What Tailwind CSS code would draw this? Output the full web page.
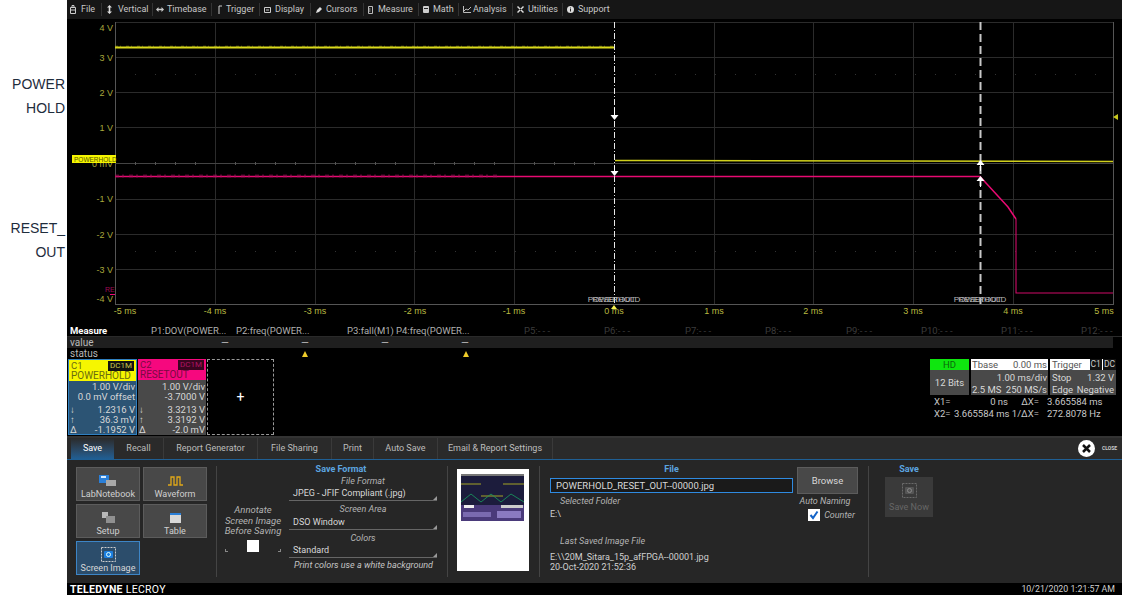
<!DOCTYPE html>
<html>
<head>
<meta charset="utf-8">
<script src="https://cdn.jsdelivr.net/npm/@tailwindcss/browser@4"></script>
</head>
<body class="bg-white">
<div class="flex w-[1122px] h-[595px] overflow-hidden font-['Liberation_Sans',Arial,sans-serif]">
  <!-- left labels -->
  <div class="w-[67px] shrink-0 bg-white text-[#1f2d3d] text-[14px] leading-[24px] text-right pr-[2px] pt-[72px]">
    <div>POWER</div>
    <div>HOLD</div>
    <div class="mt-[96px]">RESET_</div>
    <div>OUT</div>
  </div>

  <div class="w-[1055px] flex flex-col bg-black text-[#cfcfcf] text-[9.5px] leading-[11px] font-['Roboto','Liberation_Sans',sans-serif]">
    <!-- menu -->
    <div class="h-[19px] flex items-center bg-[#161616] text-[#c8c8c8] text-[9px] shrink-0 pl-[3px]">
      <div class="w-[32px] flex items-center gap-[5px] border-r border-[#333] h-[13px]"><svg class="w-[6px] h-[9px]" viewBox="0 0 6 9"><path d="M.5 2.500h5v6h-5zM2 2.500v-2h2v2M.5 5h5" fill="none" stroke="#ccc"/></svg>File</div>
      <div class="w-[51px] flex items-center gap-[6px] border-r border-[#333] h-[13px] pl-[5px]"><svg class="w-[5px] h-[9px]" viewBox="0 0 5 9"><path d="M2.500 0 5 2.500H3.300v4H5L2.500 9 0 6.500h1.700v-4H0z" fill="#ddd"/></svg>Vertical</div>
      <div class="w-[59px] flex items-center gap-[3px] border-r border-[#333] h-[13px] pl-[3px]"><svg class="w-[8px] h-[5px]" viewBox="0 0 8 5"><path d="M0 2.500 2.500 0v1.700h3V0L8 2.500 5.500 5V3.300h-3V5z" fill="#ccc"/></svg>Timebase</div>
      <div class="w-[48px] flex items-center gap-[4px] border-r border-[#333] h-[13px] pl-[6px]"><svg class="w-[4px] h-[9px]" viewBox="0 0 4 9"><path d="M1 9V1h3" fill="none" stroke="#ccc"/></svg>Trigger</div>
      <div class="w-[51px] flex items-center gap-[4px] border-r border-[#333] h-[13px] pl-[4px]"><svg class="w-[7px] h-[6px]" viewBox="0 0 7 6"><path d="M.5.500h6v5h-6zM2 3h3" fill="none" stroke="#ccc"/></svg>Display</div>
      <div class="w-[53px] flex items-center gap-[4px] border-r border-[#333] h-[13px] pl-[5px]"><svg class="w-[6px] h-[6px]" viewBox="0 0 6 6"><path d="M0 6 1 3 4 0l2 2-3 3z" fill="#ddd"/></svg>Cursors</div>
      <div class="w-[55px] flex items-center gap-[5px] border-r border-[#333] h-[13px] pl-[4px]"><svg class="w-[5px] h-[8px]" viewBox="0 0 5 8"><path d="M.5.500h4v7h-4zM.5 3h2M.5 5h2" fill="none" stroke="#bbb"/></svg>Measure</div>
      <div class="w-[40px] flex items-center gap-[4px] border-r border-[#333] h-[13px] pl-[4px]"><svg class="w-[6px] h-[7px]" viewBox="0 0 6 7"><path d="M0 1q0-1 1-1h4q1 0 1 1v5q0 1-1 1H1Q0 7 0 6z" fill="#ccc"/><path d="M1 2h4v1H1z" fill="#222"/></svg>Math</div>
      <div class="w-[54px] flex items-center gap-[2px] border-r border-[#333] h-[13px] pl-[4px]"><svg class="w-[8px] h-[7px]" viewBox="0 0 8 7"><path d="M.5 0v6.500H8M1 5l2-2 2 1 3-3" fill="none" stroke="#bbb"/></svg>Analysis</div>
      <div class="w-[50px] flex items-center gap-[4px] border-r border-[#333] h-[13px] pl-[4px]"><svg class="w-[7px] h-[7px]" viewBox="0 0 7 7"><path d="M1 0l6 6-1 1-6-6zM6 0 0 6l1 1 6-6z" fill="#ddd"/></svg>Utilities</div>
      <div class="flex items-center gap-[4px] pl-[4px]"><svg class="w-[7px] h-[7px]" viewBox="0 0 7 7"><circle cx="3.500" cy="3.500" r="3.500" fill="#ddd"/><path d="M3 1.500h1v1H3zM3 3h1v2.500H3z" fill="#222"/></svg>Support</div>
    </div>

    <!-- graph -->
    <div class="h-[306px] shrink-0 relative">
      <svg class="absolute left-0 top-0" width="1055" height="306" viewBox="67 19 1055 306" font-family="Liberation Sans, Arial, sans-serif" font-size="9">
        <g stroke="#2b2b2b" stroke-width="1" shape-rendering="crispEdges">
          <path d="M115 22.500H1113M115 57.500H1113M115 92.500H1113M115 127.500H1113M115 199.500H1113M115 234.500H1113M115 269.500H1113"/>
          <path d="M215.500 22V304M315.500 22V304M414.500 22V304M514.500 22V304M714.500 22V304M813.500 22V304M913.500 22V304M1013.500 22V304"/>
        </g>
        <path d="M115.500 22V304.500H1113.500V22" fill="none" stroke="#555" shape-rendering="crispEdges"/>
        <path d="M115 163.500H1113" stroke="#444" shape-rendering="crispEdges"/>
        <path stroke="#555" shape-rendering="crispEdges" d="M135.500 162v3M155.500 162v3M175.500 162v3M195.500 162v3M235.500 162v3M255.500 162v3M275.500 162v3M295.500 162v3M335.500 162v3M355.500 162v3M375.500 162v3M395.500 162v3M434.500 162v3M454.500 162v3M474.500 162v3M494.500 162v3M534.500 162v3M554.500 162v3M574.500 162v3M594.500 162v3"/>
        <path stroke="#333" stroke-dasharray="1 19" d="M135 74.500H1113M135 251.500H1113"/>
        <g fill="#a8a83c" text-anchor="end">
          <text x="113" y="31">4 V</text><text x="113" y="61">3 V</text><text x="113" y="96">2 V</text><text x="113" y="131">1 V</text><text x="113" y="167">0 mV</text><text x="113" y="202">-1 V</text><text x="113" y="238">-2 V</text><text x="113" y="273">-3 V</text><text x="113" y="302">-4 V</text>
        </g>
        <g fill="#b9b941" text-anchor="middle">
          <text x="125" y="314">-5 ms</text><text x="215" y="314">-4 ms</text><text x="315" y="314">-3 ms</text><text x="415" y="314">-2 ms</text><text x="514" y="314">-1 ms</text><text x="614" y="314">0 ms</text><text x="714" y="314">1 ms</text><text x="813" y="314">2 ms</text><text x="913" y="314">3 ms</text><text x="1013" y="314">4 ms</text><text x="1104" y="314">5 ms</text>
        </g>
        <!-- traces -->
        <path d="M115 47.500H614.500" fill="none" stroke="#dcdc1c" stroke-width="2"/>
        <path d="M115 46.500H614" fill="none" stroke="#a8a818" stroke-width="1.500" stroke-dasharray="3 2 1 5" opacity=".6"/>
        <path d="M615 160.500H640L1113 161.500" fill="none" stroke="#d0d01c" stroke-width="1.500"/>
        <path d="M115 176.500H980L1008 207L1016 219" fill="none" stroke="#e80a72" stroke-width="1.500"/>
        <path d="M1016 219V293H1113" fill="none" stroke="#d00a68" stroke-width="1.100"/>
        <path d="M115 176H500" fill="none" stroke="#a01058" stroke-width="3" stroke-dasharray="4 3 2 5" opacity=".5"/>
        <!-- cursors -->
        <path d="M614.500 22V304" stroke="#e8e8e8" stroke-dasharray="6 2 1 2" shape-rendering="crispEdges"/>
        <path d="M980.500 22V304" stroke="#c8c8c8" stroke-width="2" stroke-dasharray="8 4"/>
        <g fill="#fff">
          <path d="M610.500 115h8l-4 5z"/><path d="M610.500 171h8l-4 5z"/><path d="M614 108h1v9h-1z"/><path d="M614 166h1v8h-1z"/>
          <path d="M976.500 165h8l-4-5zM976.500 181h8l-4-5z"/><path d="M980 163h1v8h-1zM980 180h1v7h-1z"/>
        </g>
        <g fill="#b8b8b8" font-size="8" text-anchor="middle">
          <text x="614" y="302">POWERHOLD</text><text x="614" y="302">RESETOUT</text><text x="980" y="302">POWERHOLD</text><text x="980" y="302">RESETOUT</text>
        </g>
        <rect x="72" y="155" width="44" height="8" fill="#f5f500"/>
        <text x="74" y="161.500" font-size="6.500" fill="#555500">POWERHOLD</text>
        <text x="105" y="292" font-size="7" fill="#9c0a55">RE</text>
        <path d="M110 294.500h5" stroke="#ee0a78"/>
        <path d="M1113 117l5-3v6z" fill="#c8c81e"/>
        <path d="M611 309l3-4 3 4z" fill="#f5f050"/>
      </svg>
    </div>

    <!-- measure table -->
    <div class="shrink-0 h-[12px] flex items-center text-[#b0b0b0] text-[9.500px] pl-[3px] border-b border-[#2a2a2a] whitespace-nowrap">
      <div class="w-[81px] font-bold text-white">Measure</div>
      <div class="w-[85px]">P1:DOV(POWER...</div>
      <div class="w-[111px]">P2:freq(POWER...</div>
      <div class="w-[49px]">P3:fall(M1)</div>
      <div class="w-[128px]">P4:freq(POWER...</div>
      <div class="w-[80px] text-[#3c3c3c]">P5:- - -</div>
      <div class="w-[81px] text-[#3c3c3c]">P6:- - -</div>
      <div class="w-[80px] text-[#3c3c3c]">P7:- - -</div>
      <div class="w-[81px] text-[#3c3c3c]">P8:- - -</div>
      <div class="w-[75px] text-[#3c3c3c]">P9:- - -</div>
      <div class="w-[80px] text-[#3c3c3c]">P10:- - -</div>
      <div class="w-[80px] text-[#3c3c3c]">P11:- - -</div>
      <div class="text-[#3c3c3c]">P12:- - -</div>
    </div>
    <div class="shrink-0 h-[11px] w-[1046px] flex items-center bg-[#1f1f1f] text-[#b8b8b8] text-[10px] pl-[3px]">
      <div class="w-[115px]">value</div>
      <div class="w-[80px] text-center">—</div>
      <div class="w-[80px] text-center">—</div>
      <div class="w-[80px] text-center">—</div>
      <div class="w-[80px] text-center">—</div>
    </div>
    <div class="shrink-0 h-[11px] flex items-center text-[#b8b8b8] text-[10px] pl-[3px]">
      <div class="w-[232px]">status</div>
      <div class="w-[8px] h-[6px]"><svg class="w-[6px] h-[6px]" viewBox="0 0 6 6"><path d="M3 0l3 6H0z" fill="#eecb2a"/></svg></div>
      <div class="w-[160px] h-[6px] ml-[153px]"><svg class="w-[6px] h-[6px]" viewBox="0 0 6 6"><path d="M3 0l3 6H0z" fill="#eecb2a"/></svg></div>
    </div>

    <!-- channels row -->
    <div class="shrink-0 h-[77px] flex pl-[1px] text-[#d8d8d8] whitespace-nowrap">
      <div class="w-[69px] h-[76px] border border-[#2f7fc0] bg-[#2c5474] flex flex-col mr-[1px]">
        <div class="h-[21px] bg-[#f6f600] text-[#6b6b10] px-[2px] shrink-0">
          <div class="flex justify-between leading-[10px] pt-[1px]"><span>C1</span><span class="bg-[#111] text-[#c8c84a] text-[8px] px-[2px]">DC1M</span></div>
          <div class="text-[10px] leading-[10px]">POWERHOLD</div>
        </div>
        <div class="text-right px-[1px] pt-[1px] leading-[10px]">
          <div>1.00 V/div</div><div>0.0 mV offset</div>
          <div class="flex justify-between mt-[3px]"><span>↓</span><span>1.2316 V</span></div>
          <div class="flex justify-between"><span>↑</span><span>36.3 mV</span></div>
          <div class="flex justify-between"><span>Δ</span><span>-1.1952 V</span></div>
        </div>
      </div>
      <div class="w-[68px] h-[76px] bg-[#494949] flex flex-col">
        <div class="h-[21px] bg-[#f6087e] text-[#7a0a42] px-[2px] shrink-0">
          <div class="flex justify-between leading-[10px] pt-[1px]"><span>C2</span><span class="bg-[#3a0520] text-[#b01464] text-[8px] px-[2px]">DC1M</span></div>
          <div class="text-[10px] leading-[10px]">RESETOUT</div>
        </div>
        <div class="text-right px-[1px] pt-[2px] leading-[10px]">
          <div>1.00 V/div</div><div>-3.7000 V</div>
          <div class="flex justify-between mt-[3px]"><span>↓</span><span>3.3213 V</span></div>
          <div class="flex justify-between"><span>↑</span><span>3.3192 V</span></div>
          <div class="flex justify-between"><span>Δ</span><span>-2.0 mV</span></div>
        </div>
      </div>
      <div class="w-[67px] h-[76px] ml-[1px] border border-dashed border-[#999] flex items-center justify-center text-white text-[14px]">+</div>

      <!-- timebase block -->
      <div class="ml-[656px] flex flex-col w-[186px] text-[9.500px]">
        <div class="flex gap-[2px] h-[36px]">
          <div class="w-[39px] flex flex-col bg-[#494949]">
            <div class="h-[11px] bg-[#0fe60f] text-[#0a6a0a] text-center">HD</div>
            <div class="flex-1 flex items-center justify-center">12 Bits</div>
          </div>
          <div class="w-[77px] flex flex-col bg-[#494949] px-[1px]">
            <div class="h-[11px] -mx-[1px] px-[1px] bg-white text-[#555] flex justify-between"><span>Tbase</span><span>0.00 ms</span></div>
            <div class="text-right mt-[2px]">1.00 ms/div</div>
            <div class="flex justify-between mt-[1px]"><span>2.5 MS</span><span>250 MS/s</span></div>
          </div>
          <div class="w-[66px] flex flex-col bg-[#494949] px-[2px]">
            <div class="h-[11px] -mx-[2px] pl-[2px] bg-white text-[#555] flex justify-between"><span>Trigger</span><span class="flex gap-[1px] text-[8.500px]"><span class="bg-[#111] text-[#ccc] px-[1px]">C1</span><span class="bg-[#111] text-[#ccc] px-[1px]">DC</span></span></div>
            <div class="flex justify-between mt-[2px]"><span>Stop</span><span>1.32 V</span></div>
            <div class="flex justify-between mt-[1px]"><span>Edge</span><span>Negative</span></div>
          </div>
        </div>
        <div class="grid grid-cols-[20px_54px_31px_70px] pl-[4px] mt-[1px] leading-[12px] text-[#c8c8c8]">
          <span>X1=</span><span class="text-right">0 ns</span><span class="text-right">ΔX=</span><span class="pl-[8px]">3.665584 ms</span>
          <span>X2=</span><span class="text-right">3.665584 ms</span><span class="text-right">1/ΔX=</span><span class="pl-[8px]">272.8078 Hz</span>
        </div>
      </div>
    </div>

    <!-- tabs -->
    <div class="shrink-0 h-[2px] bg-[#333]"></div>
    <div class="shrink-0 h-[22px] flex items-stretch bg-[#2a2a2a] border-b border-[#1f5f94] text-[#bdbdbd] text-[9px]">
      <div class="w-[4px]"></div>
      <div class="w-[43px] flex items-center justify-center text-white bg-gradient-to-b from-[#2a2a2a] to-[#1f5f94]">Save</div>
      <div class="w-[50px] flex items-center justify-center border-r border-[#3a3a3a]">Recall</div>
      <div class="w-[94px] flex items-center justify-center border-r border-[#3a3a3a]">Report Generator</div>
      <div class="w-[74px] flex items-center justify-center border-r border-[#3a3a3a]">File Sharing</div>
      <div class="w-[42px] flex items-center justify-center border-r border-[#3a3a3a]">Print</div>
      <div class="w-[64px] flex items-center justify-center border-r border-[#3a3a3a]">Auto Save</div>
      <div class="w-[115px] flex items-center justify-center border-r border-[#3a3a3a]">Email &amp; Report Settings</div>
      <div class="ml-[525px] flex items-center gap-[7px]">
        <svg class="w-[17px] h-[17px]" viewBox="0 0 17 17"><circle cx="8.500" cy="8.500" r="8.500" fill="#fff"/><path d="M5 5l7 7M12 5l-7 7" stroke="#111" stroke-width="2.500"/></svg>
        <span class="text-[5px] font-bold text-[#ccc]">CLOSE</span>
      </div>
    </div>

    <!-- dialog -->
    <div class="flex-1 flex bg-[#262626] min-h-0 text-[#c8c8c8]">
      <!-- buttons -->
      <div class="w-[149px] shrink-0 pl-[9px] pt-[7px] grid grid-cols-[64px_64px] grid-rows-[34px_34px_34px] gap-x-[3px] gap-y-[3px] content-start whitespace-nowrap text-[9px]">
        <div class="bg-[#484848] border border-[#5c5c5c] flex flex-col items-center justify-end text-[#d0d0d0]">
          <svg class="w-[18px] h-[12px] mb-[2px]" viewBox="0 0 18 12"><rect x="0" y="0" width="10" height="8" fill="#2a7fd8"/><rect x="7" y="5" width="10" height="6" fill="#a8a8a8"/><rect x="2" y="1" width="5" height="2" fill="#d8ecff"/></svg>
          <span>LabNotebook</span>
        </div>
        <div class="bg-[#484848] border border-[#5c5c5c] flex flex-col items-center justify-end text-[#d0d0d0]">
          <svg class="w-[15px] h-[10px] mb-[3px]" viewBox="0 0 15 10"><path d="M0 9h3V1h3v8h3V1h3v8h3" fill="none" stroke="#e0a818" stroke-width="1.300"/></svg>
          <span>Waveform</span>
        </div>
        <div class="bg-[#484848] border border-[#5c5c5c] flex flex-col items-center justify-end text-[#d0d0d0]">
          <svg class="w-[13px] h-[12px] mb-[2px]" viewBox="0 0 13 12"><rect x="0" y="0" width="6" height="6" fill="#b8b8b8"/><rect x="4" y="4" width="9" height="7" fill="#909090"/></svg>
          <span>Setup</span>
        </div>
        <div class="bg-[#484848] border border-[#5c5c5c] flex flex-col items-center justify-end text-[#d0d0d0]">
          <svg class="w-[11px] h-[10px] mb-[3px]" viewBox="0 0 11 10"><rect width="11" height="10" fill="#d8d8d8"/><rect width="11" height="2" fill="#2a7fd8"/></svg>
          <span>Table</span>
        </div>
        <div class="bg-[#2c4d6b] border border-[#3d85c6] flex flex-col items-center justify-end text-[#d8d8d8]">
          <svg class="w-[15px] h-[15px] mb-[1px]" viewBox="0 0 15 15"><rect x=".5" y=".5" width="14" height="14" fill="none" stroke="#ccc" stroke-dasharray="2 1"/><rect x="3" y="4" width="9" height="7" rx="1" fill="#1d7fe0"/><circle cx="7.500" cy="7.500" r="2" fill="none" stroke="#dff"/></svg>
          <span>Screen Image</span>
        </div>
      </div>
      <!-- annotate -->
      <div class="w-[73px] shrink-0 border-l border-[#444] my-[6px] flex flex-col items-center italic text-[#b4b4b4] text-[9.500px] leading-[10.500px] pt-[39px]">
        <div class="text-center">Annotate<br>Screen Image<br>Before Saving</div>
        <div class="w-[56px] mt-[3px] flex justify-between items-end">
          <span class="w-[3px] h-[3px] border-l border-b border-[#888]"></span>
          <span class="w-[12px] h-[12px] bg-white"></span>
          <span class="w-[3px] h-[3px] border-r border-b border-[#888]"></span>
        </div>
      </div>
      <!-- save format -->
      <div class="w-[158px] shrink-0 flex flex-col pt-[4px] text-[9px] whitespace-nowrap">
        <div class="font-bold text-[#5ca5e0] leading-[11px] w-[104px] text-center">Save Format</div>
        <div class="italic text-[#b4b4b4] leading-[11px] mt-[1px] w-[148px] text-center">File Format</div>
        <div class="w-[148px] border-b border-[#666] h-[14px] flex justify-between items-end pl-[4px] leading-[13px] text-[#d8d8d8]"><span>JPEG - JFIF Compliant (.jpg)</span><span class="w-0 h-0 border-l-[4px] border-l-transparent border-b-[4px] border-b-[#999]"></span></div>
        <div class="italic text-[#b4b4b4] leading-[11px] mt-[3px] w-[148px] text-center">Screen Area</div>
        <div class="w-[148px] border-b border-[#666] h-[14px] flex justify-between items-end pl-[4px] leading-[13px] text-[#d8d8d8] mt-[1px]"><span>DSO Window</span><span class="w-0 h-0 border-l-[4px] border-l-transparent border-b-[4px] border-b-[#999]"></span></div>
        <div class="italic text-[#b4b4b4] leading-[11px] mt-[3px] w-[148px] text-center">Colors</div>
        <div class="w-[148px] border-b border-[#666] h-[14px] flex justify-between items-end pl-[4px] leading-[13px] text-[#d8d8d8]"><span>Standard</span><span class="w-0 h-0 border-l-[4px] border-l-transparent border-b-[4px] border-b-[#999]"></span></div>
        <div class="italic text-[#c4c4c4] pl-[5px] leading-[11px] mt-[2px]">Print colors use a white background</div>
      </div>
      <!-- thumb -->
      <div class="w-[10px] shrink-0 border-l border-[#444] my-[6px]"></div>
      <div class="w-[82px] shrink-0 pt-[9px]">
        <div class="w-[72px] h-[102px] bg-white pt-[5px] pl-[4px]">
          <svg class="w-[63px] h-[47px]" viewBox="0 0 63 47"><rect width="63" height="47" fill="#1c1c3c"/><rect width="63" height="2" fill="#777"/><path d="M0 10H20M20 22H42M42 10H63" stroke="#c8c820" stroke-width=".8" fill="none"/><path d="M0 28 10 20 20 28 30 20 40 28 50 20 63 28" stroke="#18a060" stroke-width=".8" fill="none"/><rect y="31" width="63" height="16" fill="#4a3a7a"/><rect x="3" y="31" width="10" height="3" fill="#eee"/><rect x="40" y="31" width="22" height="3" fill="#ccc"/><rect x="2" y="38" width="28" height="5" fill="#7a6ab0"/><rect x="36" y="37" width="24" height="7" fill="#8a7ac0"/></svg>
        </div>
      </div>
      <!-- file -->
      <div class="w-[11px] shrink-0 border-l border-[#444] my-[6px]"></div>
      <div class="w-[319px] shrink-0 flex flex-col pt-[4px] relative text-[9px] whitespace-nowrap">
        <div class="flex">
          <div class="w-[243px]">
            <div class="font-bold text-[#5ca5e0] text-center leading-[11px]">File</div>
            <div class="h-[15px] mt-[3px] border border-[#2f8ae0] bg-[#1a1a1a] text-[#d8d8d8] text-[9.500px] pl-[5px] leading-[13px]">POWERHOLD_RESET_OUT--00000.jpg</div>
            <div class="italic text-[#b4b4b4] pl-[10px] mt-[3px] leading-[11px]">Selected Folder</div>
            <div class="mt-[2px] text-[#d0d0d0] leading-[11px]">E:\</div>
          </div>
          <div class="ml-[4px] w-[61px] flex flex-col items-center">
            <div class="w-[61px] h-[27px] mt-[3px] bg-[#484848] border border-[#5c5c5c] text-[#d8d8d8] text-[9.500px] flex items-center justify-center">Browse</div>
            <div class="italic text-[#b4b4b4] mt-[2px] leading-[11px] -ml-[5px]">Auto Naming</div>
            <div class="flex items-center gap-[4px] mt-[2px] italic text-[#b4b4b4] ml-[8px]">
              <svg class="w-[12px] h-[12px]" viewBox="0 0 12 12"><rect width="12" height="12" fill="#fff"/><path d="M2.500 6 5 9l4.500-6.500" fill="none" stroke="#1464c8" stroke-width="2"/></svg>
              <span>Counter</span>
            </div>
          </div>
        </div>
        <div class="italic text-[#b4b4b4] pl-[10px] mt-[15px] leading-[11px]">Last Saved Image File</div>
        <div class="mt-[5px] text-[#d0d0d0] leading-[10px]">E:\\20M_Sitara_15p_afFPGA--00001.jpg<br>20-Oct-2020 21:52:36</div>
        <div class="absolute right-0 top-[6px] bottom-[6px] border-r border-[#444]"></div>
      </div>
      <!-- save now -->
      <div class="flex-1 pl-[16px] pt-[4px] text-[9px] whitespace-nowrap">
        <div class="w-[48px] font-bold text-[#5ca5e0] text-center leading-[11px]">Save</div>
        <div class="w-[48px] h-[40px] mt-[2px] bg-[#3a3a3a] flex flex-col items-center text-[#666] pt-[6px]">
          <svg class="w-[15px] h-[15px]" viewBox="0 0 15 15"><rect x=".5" y=".5" width="14" height="14" fill="none" stroke="#6a6a6a" stroke-dasharray="2 1"/><rect x="3" y="4" width="9" height="7" rx="1" fill="#555"/><circle cx="7.500" cy="7.500" r="2" fill="none" stroke="#888"/></svg>
          <span class="mt-[4px] leading-[10px]">Save Now</span>
        </div>
      </div>
    </div>

    <!-- footer -->
    <div class="shrink-0 h-[12px] bg-black flex items-center justify-between pl-[3px] pr-[7px]">
      <span class="font-bold text-white text-[10.500px] tracking-[.3px]">TELEDYNE <span class="font-normal">LECROY</span></span>
      <span class="text-[#cfcfcf] text-[8.800px]">10/21/2020 1:21:57 AM</span>
    </div>
  </div>
</div>
</body>
</html>
